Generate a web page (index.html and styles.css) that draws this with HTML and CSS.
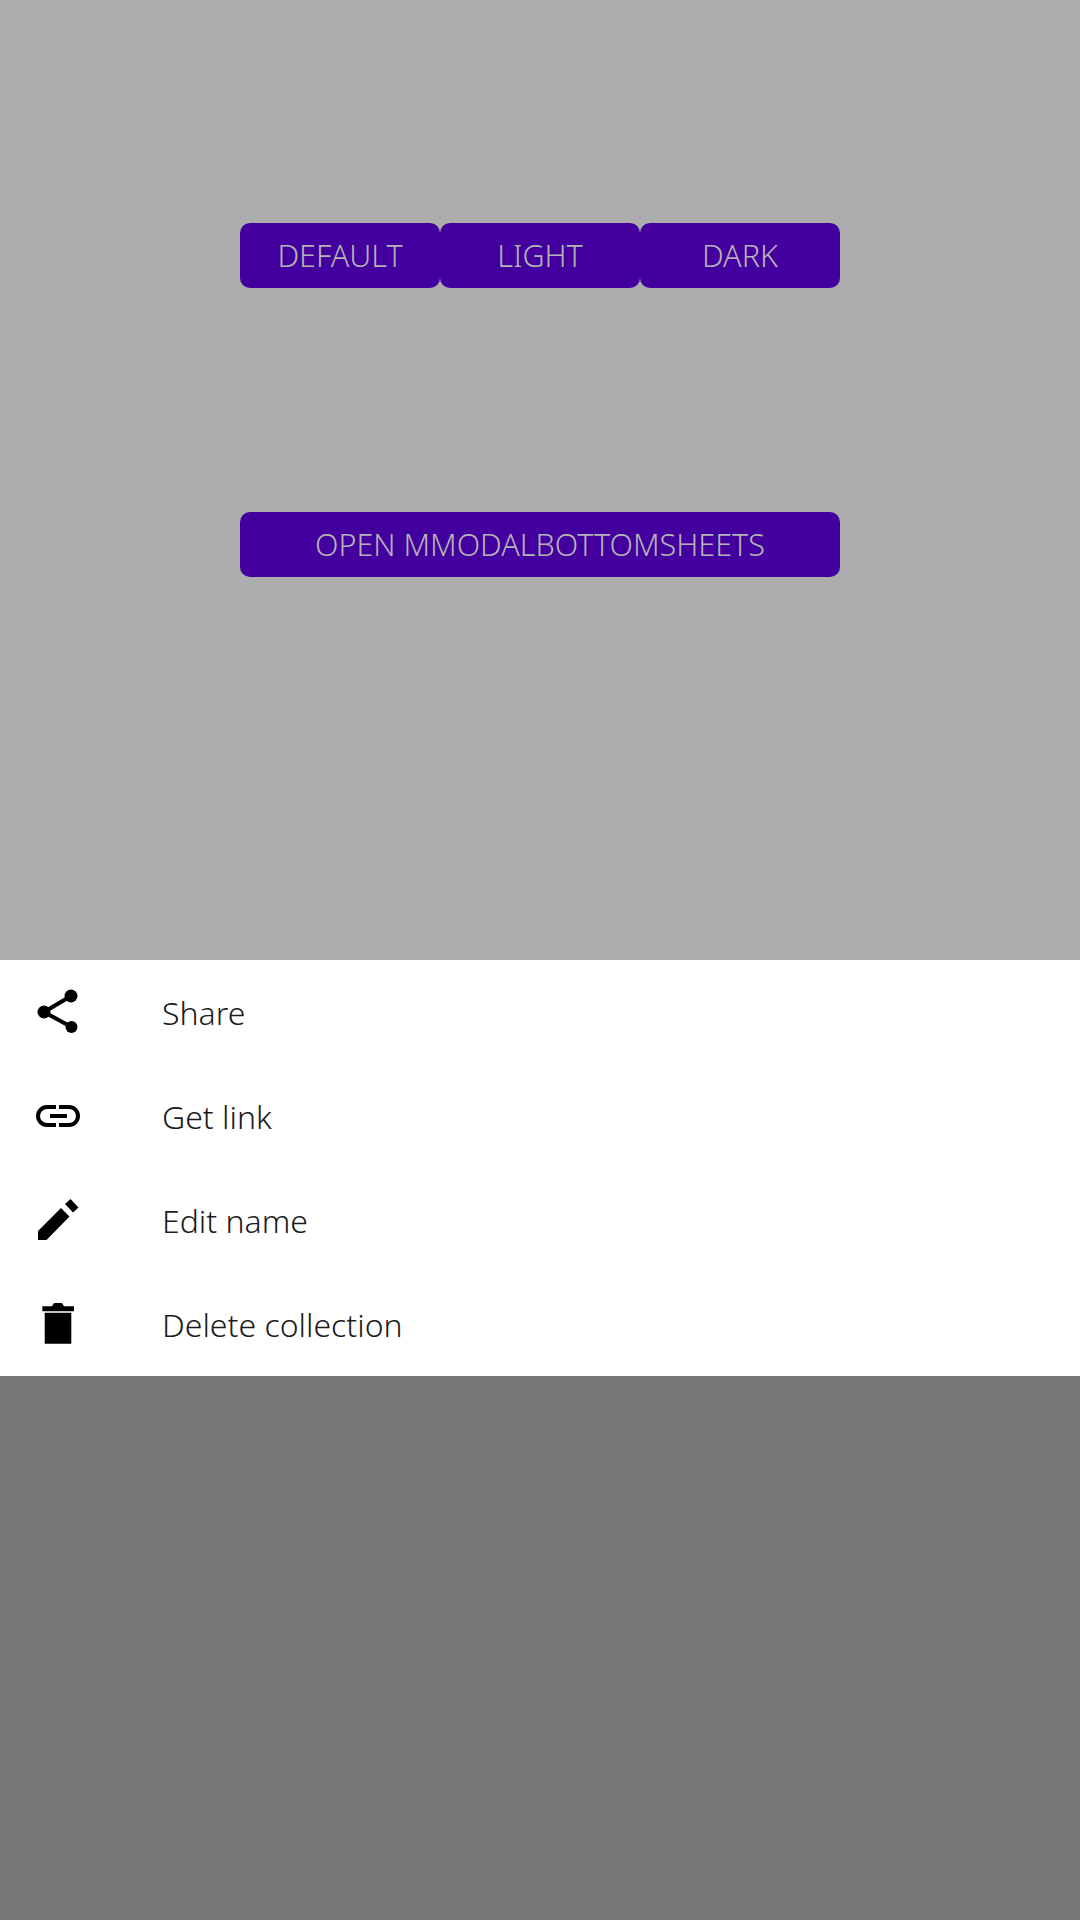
FILE: index.html
```html
<!DOCTYPE html>
<html lang="en">
<head>
<meta charset="utf-8">
<title>Modal bottom sheets</title>
<link rel="stylesheet" href="styles.css">
</head>
<body>
<main class="content">
  <div class="button-row">
    <button class="btn">DEFAULT</button>
    <button class="btn">LIGHT</button>
    <button class="btn">DARK</button>
  </div>
  <div class="button-row">
    <button class="btn">OPEN MMODALBOTTOMSHEETS</button>
  </div>
</main>
<section class="sheet">
  <div class="item">
    <svg class="icon" viewBox="0 0 70 70"><circle cx="20" cy="32" r="6.5"/><circle cx="47" cy="16" r="6.5"/><circle cx="47.5" cy="47" r="6"/><path class="line" d="M20 32 47 16M20 32 47.5 47"/></svg>
    <span class="label">Share</span>
  </div>
  <div class="item">
    <svg class="icon" viewBox="0 0 70 70"><path class="line" d="M32 23H23a9 9 0 0 0 0 18H32M35 23H45a9 9 0 0 1 0 18H35M26 32H43"/></svg>
    <span class="label">Get link</span>
  </div>
  <div class="item">
    <svg class="icon" viewBox="0 0 70 70"><path d="M14 43 37 20 45.5 28.5 22.5 52H14ZM41 16 46.5 11 54.5 19.5 49 24.5Z"/></svg>
    <span class="label">Edit name</span>
  </div>
  <div class="item">
    <svg class="icon" viewBox="0 0 70 70"><path d="M18.3 14.3H28L30 11H38L40 14.3H50V19.3H18.3ZM20.7 20.7H47.3V51.7H20.7Z"/></svg>
    <span class="label">Delete collection</span>
  </div>
</section>
<div class="scrim"></div>
</body>
</html>
```

FILE: styles.css
```css
* { box-sizing: border-box; }
html, body { margin: 0; height: 1920px; }
body {
  display: flex;
  flex-direction: column;
  background: #777777;
  font-family: "Noto Sans", sans-serif;
}
.content {
  height: 960px;
  background: #adadad;
  padding-top: 223px;
  display: flex;
  flex-direction: column;
  align-items: center;
  gap: 224px;
}
.button-row { display: flex; width: 600px; }
.btn {
  flex: 1;
  height: 65px;
  border: 0;
  border-radius: 10px;
  background: #43009e;
  color: #b4b4b4;
  font: 300 30.5px "Noto Sans", sans-serif;
  padding: 0 0 2px;
}
.sheet { height: 416px; background: #fff; display: flex; flex-direction: column; }
.item { height: 104px; display: flex; align-items: center; padding-left: 24px; gap: 68px; }
.icon { width: 70px; height: 70px; fill: #000; flex: none; margin-top: 6px; }
.line { fill: none; stroke: #000; stroke-width: 4; }
.label { font-size: 32px; font-weight: 300; color: #1c1c1c; }
.scrim { flex: 1; }
```
